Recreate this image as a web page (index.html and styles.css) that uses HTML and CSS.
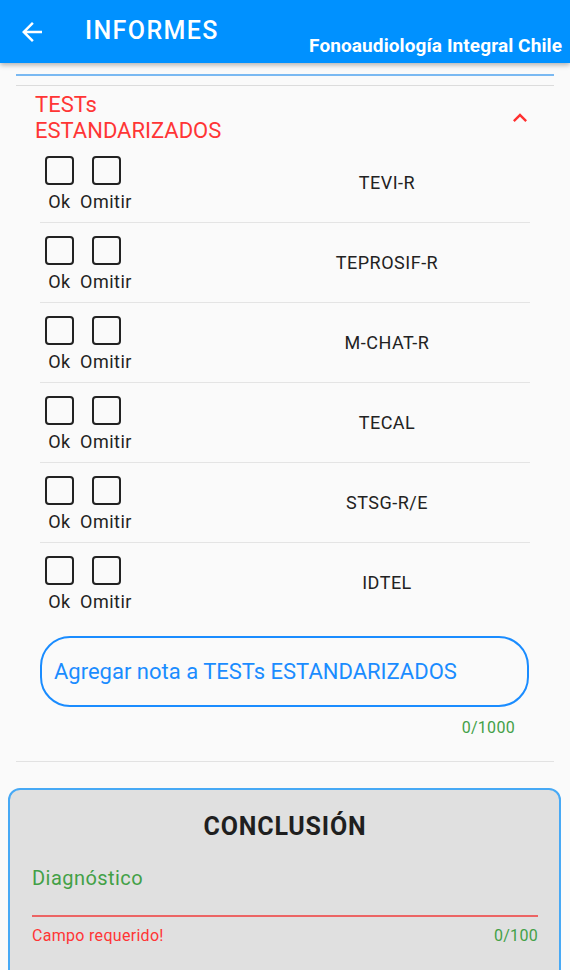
FILE: index.html
```html
<!DOCTYPE html>
<html lang="es">
<head>
<meta charset="utf-8">
<title>INFORMES</title>
<link rel="stylesheet" href="styles.css">
</head>
<body>
<header class="appbar">
  <svg class="back" viewBox="0 0 24 24" width="30" height="30"><path fill="#fff" d="M20 11H7.83l5.59-5.59L12 4l-8 8 8 8 1.41-1.41L7.83 13H20v-2z"/></svg>
  <h1 class="title">INFORMES</h1>
  <div class="subtitle">Fonoaudiología Integral Chile</div>
</header>
<main class="content">
  <div class="line-blue"></div>
  <div class="line-gray"></div>
  <section class="section">
    <div class="section-head">
      <div class="section-title">TESTs<br>ESTANDARIZADOS</div>
      <svg class="chev" viewBox="0 0 24 24" width="28" height="28"><path fill="#ff3030" d="M12 8l-6 6 1.41 1.41L12 10.83l4.59 4.58L18 14z"/></svg>
    </div>
    <div class="rows">
      <div class="row">
        <div class="checks"><div class="col c-ok"><span class="box"></span><span class="lbl">Ok</span></div><div class="col c-om"><span class="box"></span><span class="lbl">Omitir</span></div></div>
        <div class="name">TEVI-R</div>
      </div>
      <div class="row">
        <div class="checks"><div class="col c-ok"><span class="box"></span><span class="lbl">Ok</span></div><div class="col c-om"><span class="box"></span><span class="lbl">Omitir</span></div></div>
        <div class="name">TEPROSIF-R</div>
      </div>
      <div class="row">
        <div class="checks"><div class="col c-ok"><span class="box"></span><span class="lbl">Ok</span></div><div class="col c-om"><span class="box"></span><span class="lbl">Omitir</span></div></div>
        <div class="name">M-CHAT-R</div>
      </div>
      <div class="row">
        <div class="checks"><div class="col c-ok"><span class="box"></span><span class="lbl">Ok</span></div><div class="col c-om"><span class="box"></span><span class="lbl">Omitir</span></div></div>
        <div class="name">TECAL</div>
      </div>
      <div class="row">
        <div class="checks"><div class="col c-ok"><span class="box"></span><span class="lbl">Ok</span></div><div class="col c-om"><span class="box"></span><span class="lbl">Omitir</span></div></div>
        <div class="name">STSG-R/E</div>
      </div>
      <div class="row last">
        <div class="checks"><div class="col c-ok"><span class="box"></span><span class="lbl">Ok</span></div><div class="col c-om"><span class="box"></span><span class="lbl">Omitir</span></div></div>
        <div class="name">IDTEL</div>
      </div>
    </div>
    <div class="note">Agregar nota a TESTs ESTANDARIZADOS</div>
    <div class="counter">0/1000</div>
  </section>
  <div class="divider"></div>
</main>
<section class="card">
  <h2 class="card-title">CONCLUSIÓN</h2>
  <div class="field-label">Diagnóstico</div>
  <div class="field-line"></div>
  <div class="field-help"><span class="err">Campo requerido!</span><span class="cnt">0/100</span></div>
</section>
</body>
</html>
```
FILE: styles.css
```css
* { box-sizing: border-box; }
html, body { margin: 0; padding: 0; }
body {
  background: #fafafa;
  font-family: Roboto, "Noto Sans", sans-serif;
  color: #212121;
  width: 570px;
  overflow: hidden;
}
.appbar {
  height: 63px;
  background: #0091ff;
  display: flex;
  align-items: center;
  color: #fff;
  box-shadow: 0 2px 5px rgba(0,0,0,0.3);
  position: relative;
  z-index: 1;
}
.back { margin-left: 17px; flex: none; }
.title {
  margin: 0 0 1px 38px;
  font-size: 25px;
  font-weight: 500;
  letter-spacing: 1.4px;
  line-height: 28px;
}
.subtitle {
  margin-left: auto;
  margin-right: 8px;
  align-self: flex-end;
  margin-bottom: 6px;
  font-size: 19px;
  font-weight: 700;
  line-height: 22px;
  letter-spacing: 0.1px;
}
.content { padding: 0 16px; }
.line-blue { height: 2px; background: #7ab9f2; margin-top: 11px; }
.line-gray { height: 1px; background: #dcdcdc; margin-top: 9px; }
.section-head {
  display: flex;
  align-items: center;
  padding: 6px 20px 0 19px;
}
.section-title {
  flex: 1;
  color: #ff3535;
  font-size: 22px;
  line-height: 26px;
}
.chev { flex: none; }
.rows { margin: -1px 24px 0 24px; }
.row {
  display: flex;
  align-items: center;
  height: 80px;
  padding-top: 13px;
  padding-bottom: 10px;
  border-bottom: 1px solid #e4e4e4;
}
.row.last { border-bottom: none; height: 79px; }
.checks { display: flex; width: 204px; flex: none; align-self: flex-start; }
.col { display: flex; flex-direction: column; align-items: center; }
.c-ok { width: 39px; }
.c-om { width: 54px; }
.box {
  width: 29px;
  height: 29px;
  border: 2px solid #222;
  border-radius: 4px;
}
.lbl {
  margin-top: 6px;
  font-size: 18px;
  line-height: 21px;
  letter-spacing: 0.5px;
  color: #222;
}
.name {
  flex: 1;
  text-align: center;
  font-size: 18px;
  line-height: 21px;
  letter-spacing: 0.5px;
  color: #222;
  padding-bottom: 4px;
}
.note {
  margin: 14px 25px 0 24px;
  height: 71px;
  border: 2px solid #1a8cff;
  border-radius: 30px;
  display: flex;
  align-items: center;
  padding-left: 12px;
  font-size: 22px;
  color: #1a8cff;
}
.counter {
  text-align: right;
  margin: 11px 39px 0 0;
  font-size: 16px;
  line-height: 19px;
  letter-spacing: 0.3px;
  color: #43a047;
}
.divider { height: 1px; background: #e2e2e2; margin-top: 24px; }
.card {
  margin: 26px 9px 0 8px;
  background: #e0e0e0;
  border: 2px solid #47a9f5;
  border-radius: 12px;
  padding: 22px 21px 60px 22px;
}
.card-title {
  margin: 0;
  text-align: center;
  font-size: 25px;
  font-weight: 700;
  line-height: 30px;
  letter-spacing: 0.8px;
  color: #1f1f1f;
}
.field-label {
  margin-top: 24px;
  font-size: 20px;
  line-height: 24px;
  letter-spacing: 0.45px;
  color: #43a047;
}
.field-line { height: 2px; background: #ec6464; margin-top: 25px; }
.field-help {
  display: flex;
  justify-content: space-between;
  margin-top: 9px;
  font-size: 16px;
  line-height: 19px;
  letter-spacing: 0.3px;
}
.err { color: #ff3535; }
.cnt { color: #43a047; }
```
